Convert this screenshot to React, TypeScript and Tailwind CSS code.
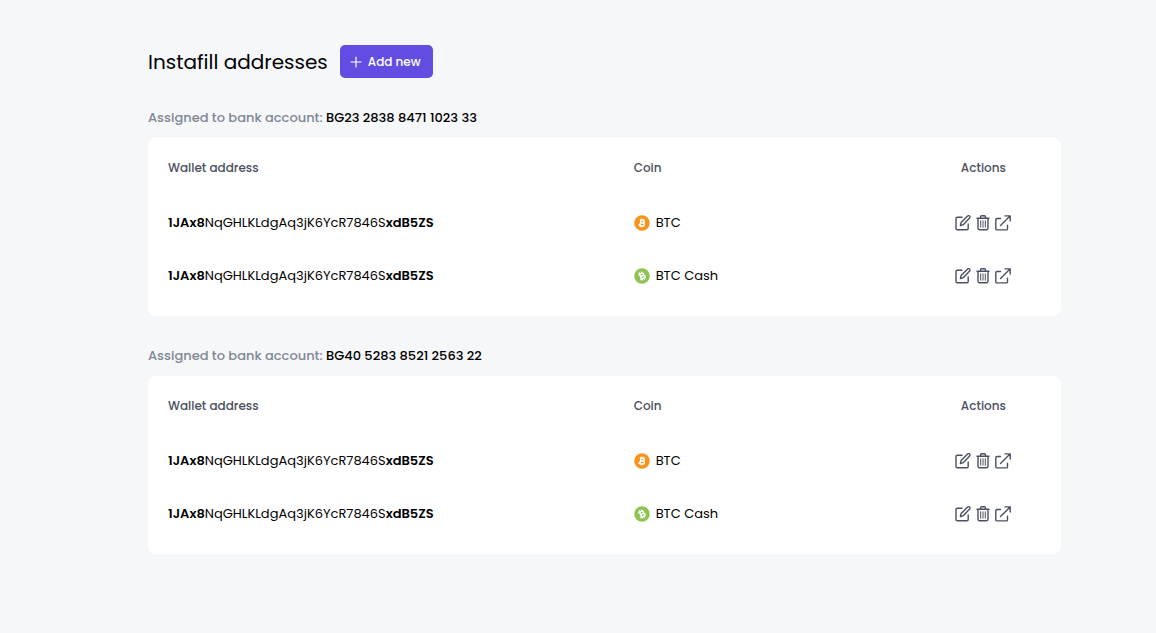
import React from "react";

type Coin = "BTC" | "BTC Cash";

interface Wallet {
  prefix: string;
  middle: string;
  suffix: string;
  coin: Coin;
}

interface Account {
  iban: string;
  wallets: Wallet[];
}

const wallet = (coin: Coin): Wallet => ({
  prefix: "1JAx8",
  middle: "NqGHLKLdgAq3jK6YcR7846S",
  suffix: "xdB5ZS",
  coin,
});

const accounts: Account[] = [
  { iban: "BG23 2838 8471 1023 33", wallets: [wallet("BTC"), wallet("BTC Cash")] },
  { iban: "BG40 5283 8521 2563 22", wallets: [wallet("BTC"), wallet("BTC Cash")] },
];

function CoinIcon({ coin }: { coin: Coin }) {
  const cash = coin === "BTC Cash";
  return (
    <svg viewBox="0 0 32 32" className="size-4 shrink-0" aria-hidden="true">
      <circle cx="16" cy="16" r="15.5" fill={cash ? "#8dc351" : "#f7931a"} />
      <g
        transform={cash ? "rotate(-24 16 16)" : "rotate(14 16 16)"}
        fill="none"
        stroke="#fff"
        strokeWidth="3"
        strokeLinejoin="round"
      >
        <path d="M10 10.500h7.500a2.700 2.700 0 0 1 0 5.400H13M13 10.500v11M13 15.900h5.500a2.800 2.800 0 0 1 0 5.600H10" />
        <path d="M14 7v3.500M18 7v3.500M14 21.500V25M18 21.500V25" strokeWidth="2" />
      </g>
    </svg>
  );
}

function EditIcon() {
  return (
    <svg viewBox="0 0 16 16" className="size-4" fill="none" stroke="currentColor" strokeWidth="1.4" strokeLinejoin="round" strokeLinecap="round" aria-hidden="true">
      <path d="M7 2.200H2.300A1.300 1.300 0 0 0 1 3.500v9.900a1.300 1.300 0 0 0 1.300 1.300h9.600a1.300 1.300 0 0 0 1.300-1.300V9" />
      <path d="M12.600 1.100a1.350 1.350 0 0 1 2 2L8.300 9.700l-2.900.8.700-2.900z" />
    </svg>
  );
}

function TrashIcon() {
  return (
    <svg viewBox="0 0 14 16" className="h-4 w-3.5" fill="none" stroke="currentColor" strokeWidth="1.4" strokeLinejoin="round" strokeLinecap="round" aria-hidden="true">
      <path d="M1 3.200h12M4.500 3V2a1.200 1.200 0 0 1 1.200-1.200h2.600A1.200 1.200 0 0 1 9.500 2v1M2 3.400v9.900a1.500 1.500 0 0 0 1.500 1.500h7a1.500 1.500 0 0 0 1.500-1.500V3.400" />
      <path d="M4.700 5.800v6.400M7 5.800v6.400M9.300 5.800v6.400" strokeWidth="1" />
    </svg>
  );
}

function OpenIcon() {
  return (
    <svg viewBox="0 0 16 16" className="size-4" fill="none" stroke="currentColor" strokeWidth="1.4" strokeLinejoin="round" strokeLinecap="round" aria-hidden="true">
      <path d="M5.500 3.500H2A1.200 1.200 0 0 0 .8 4.700v9A1.200 1.200 0 0 0 2 14.900h9.300a1.200 1.200 0 0 0 1.200-1.200v-3.500" />
      <path d="M10 .9h5.200v5.200M15 1.100 5.500 10.500" />
    </svg>
  );
}

function AccountSection({ account }: { account: Account }) {
  return (
    <section>
      <h2 className="mb-2 text-[13px] font-medium leading-6 text-[#7f8794]">
        Assigned to bank account: <span className="text-black">{account.iban}</span>
      </h2>
      <div className="rounded-lg bg-white pb-3.5">
        <table className="w-full table-fixed text-left">
          <thead>
            <tr className="text-xs leading-5 text-[#4b5060]">
              <th scope="col" className="w-[51%] px-5 pt-5 pb-[18px] font-medium">Wallet address</th>
              <th scope="col" className="w-[32%] px-5 pt-5 pb-[18px] font-medium">Coin</th>
              <th scope="col" className="w-[17%] pt-5 pb-[18px] text-center font-medium">Actions</th>
            </tr>
          </thead>
          <tbody>
            {account.wallets.map((w) => (
              <tr key={w.coin} className="h-[53px] text-[13px] leading-5 text-black">
                <td className="px-5">
                  <span className="font-semibold">{w.prefix}</span>
                  {w.middle}
                  <span className="font-semibold">{w.suffix}</span>
                </td>
                <td className="px-5">
                  <div className="flex items-center gap-1.5">
                    <CoinIcon coin={w.coin} />
                    {w.coin}
                  </div>
                </td>
                <td>
                  <div className="flex items-center justify-center gap-[5px] text-[#4b5060]">
                    <button type="button" aria-label="Edit"><EditIcon /></button>
                    <button type="button" aria-label="Delete"><TrashIcon /></button>
                    <button type="button" aria-label="Open"><OpenIcon /></button>
                  </div>
                </td>
              </tr>
            ))}
          </tbody>
        </table>
      </div>
    </section>
  );
}

export default function App() {
  return (
    <main className="flex min-h-screen flex-col gap-7 bg-[#f6f7f9] pt-[45px] pr-[95px] pb-10 pl-[148px] font-[Poppins,Inter,sans-serif]">
      <header className="flex items-center gap-3">
        <h1 className="text-xl leading-8 text-black">Instafill addresses</h1>
        <button type="button" className="flex h-[33px] items-center gap-1.5 rounded-[5px] bg-[#624de3] pr-3 pl-2.5 text-xs font-medium text-white">
          <svg viewBox="0 0 12 12" className="size-3" stroke="currentColor" strokeWidth="1.2" strokeLinecap="round" aria-hidden="true">
            <path d="M6 1v10M1 6h10" />
          </svg>
          Add new
        </button>
      </header>
      {accounts.map((a) => (
        <AccountSection key={a.iban} account={a} />
      ))}
    </main>
  );
}
